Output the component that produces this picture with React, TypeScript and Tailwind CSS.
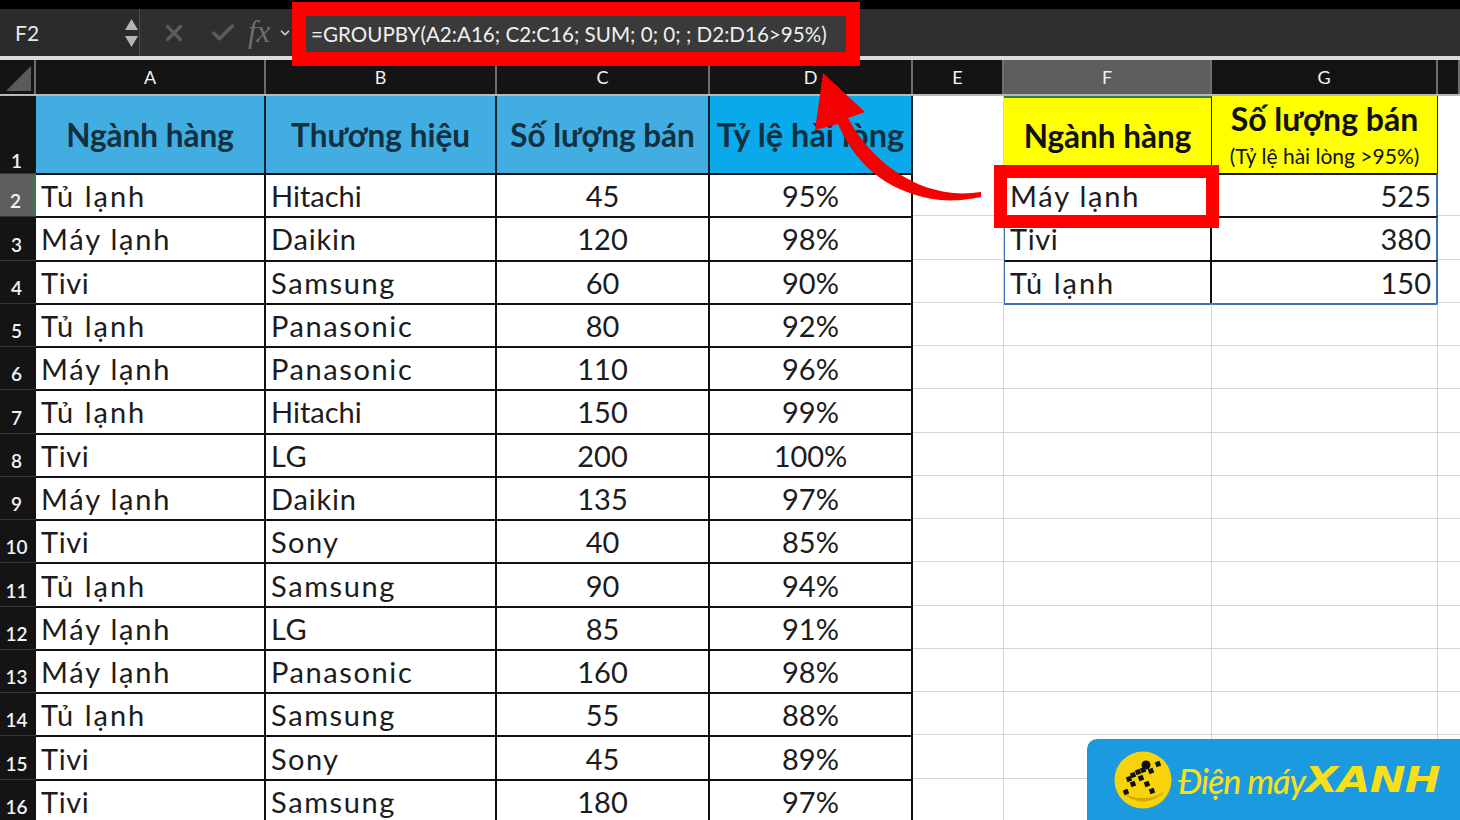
import React from 'react'
import { X, Check, ChevronDown } from 'lucide-react'

const rows = [
  ["Tủ lạnh", "Hitachi", "45", "95%"],
  ["Máy lạnh", "Daikin", "120", "98%"],
  ["Tivi", "Samsung", "60", "90%"],
  ["Tủ lạnh", "Panasonic", "80", "92%"],
  ["Máy lạnh", "Panasonic", "110", "96%"],
  ["Tủ lạnh", "Hitachi", "150", "99%"],
  ["Tivi", "LG", "200", "100%"],
  ["Máy lạnh", "Daikin", "135", "97%"],
  ["Tivi", "Sony", "40", "85%"],
  ["Tủ lạnh", "Samsung", "90", "94%"],
  ["Máy lạnh", "LG", "85", "91%"],
  ["Máy lạnh", "Panasonic", "160", "98%"],
  ["Tủ lạnh", "Samsung", "55", "88%"],
  ["Tivi", "Sony", "45", "89%"],
  ["Tivi", "Samsung", "180", "97%"],
]

const result: Record<number, [string, string]> = {
  0: ["Máy lạnh", "525"],
  1: ["Tivi", "380"],
  2: ["Tủ lạnh", "150"],
}

// Lato runs narrower than the sheet's font on some words, so spacing differs per word
const track: Record<string, string> = {
  "Tủ lạnh": "tracking-[2px]",
  "Máy lạnh": "tracking-[1.8px]",
  "Tivi": "tracking-[0.6px]",
  "Hitachi": "tracking-[0px]",
  "Daikin": "tracking-[0.8px]",
  "Samsung": "tracking-[1.6px]",
  "Panasonic": "tracking-[1.6px]",
  "LG": "tracking-[0.5px]",
  "Sony": "tracking-[1.4px]",
}

const cols = "grid grid-cols-[36px_230px_231px_213px_203px_91px_208px_226px_22px]"

const runnerDots = [
  [44, 13], [37, 20], [29, 19], [24, 21], [19, 24], [15, 28],
  [27, 27], [19, 33], [12, 41], [33, 33], [38, 40],
]

function ColHead({ label, active }: { label: string; active?: boolean }) {
  return (
    <div className={"flex items-center justify-center border-r-2 border-[#6e6e6e] pt-[1px] text-[18px] text-[#f2f2f2] " + (active ? "bg-[#5e5e5e]" : "bg-[#141414]")}>
      {label}
    </div>
  )
}

function Head({ label, bg, size }: { label: string; bg: string; size: string }) {
  return (
    <div className={"flex items-center justify-center border-r-2 border-[#10202a] pt-[2px] font-bold text-[#12303f] " + size + " " + bg}>
      {label}
    </div>
  )
}

function Runner() {
  return (
    <svg viewBox="0 0 58 58" className="h-[58px] w-[58px] shrink-0">
      <circle cx="29" cy="29" r="28.5" fill="#f7d40a" />
      <path d="M7 40 A 28 28 0 0 0 51 40 A 30 22 0 0 1 7 40 Z" fill="#d9a900" />
      <circle cx="32" cy="14" r="4.5" fill="#111" />
      {runnerDots.map(([x, y]) => (
        <rect key={x + "-" + y} x={x - 2.5} y={y - 2.5} width="5" height="5" fill="#111" transform={`rotate(-20 ${x} ${y})`} />
      ))}
    </svg>
  )
}

export default function App() {
  return (
    <div className="relative h-[820px] w-[1460px] overflow-hidden bg-white font-['Lato','Noto_Sans',sans-serif] text-[#1c1c1c]">
      {/* top strip */}
      <div className="h-[9px] bg-black" />

      {/* formula bar */}
      <div className="flex h-[47px] items-center bg-[#2f2f2f] text-[#e8e8e8]">
        <div className="flex h-full w-[140px] items-center justify-between border-r border-[#4a4a4a] bg-[#2b2b2b] pl-[15px] pr-[1px]">
          <span className="text-[21px]">F2</span>
          <div className="flex flex-col gap-[6px]">
            <svg viewBox="0 0 12 10" className="h-[11px] w-[13px]"><path d="M6 0 12 10H0Z" fill="#b5b5b5" /></svg>
            <svg viewBox="0 0 12 10" className="h-[11px] w-[13px]"><path d="M0 0H12L6 10Z" fill="#b5b5b5" /></svg>
          </div>
        </div>
        <X className="ml-[21px] h-[26px] w-[26px] text-[#5c5c5c]" strokeWidth={3} />
        <Check className="ml-[22px] h-[28px] w-[28px] text-[#5c5c5c]" strokeWidth={3} />
        <span className="ml-[11px] font-['Liberation_Serif',serif] text-[31px] italic text-[#6e6e6e]">fx</span>
        <ChevronDown className="ml-[8px] h-[14px] w-[14px] text-[#cfcfcf]" strokeWidth={3} />
      </div>
      <div className="h-[4px] bg-[#dcdcdc]" />

      {/* column letters */}
      <div className={cols + " h-[36px] border-b-2 border-[#b8b8b8]"}>
        <div className="relative border-r-2 border-[#6e6e6e] bg-[#141414]">
          <svg viewBox="0 0 26 26" className="absolute bottom-[3px] right-[3px] h-[25px] w-[25px]"><path d="M26 0V26H0Z" fill="#5a5a5a" /></svg>
        </div>
        <ColHead label="A" />
        <ColHead label="B" />
        <ColHead label="C" />
        <ColHead label="D" />
        <ColHead label="E" />
        <ColHead label="F" active />
        <ColHead label="G" />
        <ColHead label="" />
      </div>

      {/* header row */}
      <div className={cols + " h-[77px]"}>
        <div className="flex items-end justify-center bg-[#141414] pb-[3px] pr-[3px] text-[19px] font-semibold leading-none text-[#f2f2f2]">1</div>
        <Head label="Ngành hàng" bg="bg-[#41ade0]" size="text-[31.5px]" />
        <Head label="Thương hiệu" bg="bg-[#41ade0]" size="text-[31.5px]" />
        <Head label="Số lượng bán" bg="bg-[#41ade0]" size="text-[31.5px]" />
        <Head label="Tỷ lệ hài lòng" bg="bg-[#0aa9ea]" size="text-[32.5px]" />
        <div className="border-r border-[#d6d6d6]" />
        <div className="flex items-center justify-center border-t-2 border-t-[#2f7d4f] border-r border-[#222] bg-[#ffff00] pt-[2px] text-[31.5px] font-bold text-[#111]">Ngành hàng</div>
        <div className="flex flex-col items-center justify-center border-r border-[#222] bg-[#ffff00] leading-none text-[#111]">
          <span className="text-[32px] font-bold">Số lượng bán</span>
          <span className="mt-[10px] text-[21px]">(Tỷ lệ hài lòng &gt;95%)</span>
        </div>
        <div />
      </div>

      {/* data rows */}
      {rows.map((row, i) => {
        const res = result[i]
        return (
          <div key={i} className={cols + " h-[43.27px] text-[29px] leading-none"}>
            <div className={"flex items-end justify-center border-t border-[#333] pb-[6px] pr-[3px] text-[19px] font-semibold text-[#f2f2f2] " + (i === 0 ? "border-r-2 border-r-[#2f7d4f] bg-[#5e5e5e]" : "bg-[#141414]")}>
              {i + 2}
            </div>
            <div className={"flex items-center truncate border-t-2 border-r-2 border-[#111] pl-[5px] " + track[row[0]]}>{row[0]}</div>
            <div className={"flex items-center truncate border-t-2 border-r-2 border-[#111] pl-[5px] " + track[row[1]]}>{row[1]}</div>
            <div className="flex items-center justify-center border-t-2 border-r-2 border-[#111]">{row[2]}</div>
            <div className="flex items-center justify-center border-t-2 border-r-2 border-[#111]">{row[3]}</div>
            <div className="border-b border-r border-[#d6d6d6]" />
            {res ? (
              <>
                <div className={"flex items-center border-t-2 border-r-2 border-l border-[#111] border-l-[#3f6fb5] pl-[5px] " + track[res[0]]}>{res[0]}</div>
                <div className="flex items-center justify-end border-t-2 border-r-2 border-[#111] border-r-[#3f6fb5] pr-[5px]">{res[1]}</div>
              </>
            ) : (
              <>
                <div className={"border-b border-r border-[#d6d6d6] " + (i === 3 ? "border-t-2 border-t-[#3f6fb5]" : "")} />
                <div className={"border-b border-r border-[#d6d6d6] " + (i === 3 ? "border-t-2 border-t-[#3f6fb5]" : "")} />
              </>
            )}
            <div className="border-b border-[#d6d6d6]" />
          </div>
        )
      })}

      {/* formula callout */}
      <div className="absolute left-[292px] top-[2px] flex h-[64px] w-[568px] items-center whitespace-nowrap border-[14px] border-[#ff0000] bg-[#3a3a3a] pl-[5px] text-[20.6px] text-[#f0f0f0]">
        =GROUPBY(A2:A16; C2:C16; SUM; 0; 0; ; D2:D16&gt;95%)
      </div>

      {/* result cell callout */}
      <div className="absolute left-[994px] top-[165px] h-[63px] w-[225px] border-[13px] border-[#ff0000]" />

      {/* arrow */}
      <svg viewBox="0 0 1460 820" className="pointer-events-none absolute left-0 top-0 h-[820px] w-[1460px]">
        <path d="M823 73 L865 112 L848 118 C868 155 905 188 953 193 C965 194 972 193 981 192 L981 197 C965 200 955 201 940 200 C893 194 858 170 838 124 L815 130 Z" fill="#f50000" />
      </svg>

      {/* logo */}
      <div className="absolute left-[1087px] top-[739px] flex h-[81px] w-[373px] items-center rounded-tl-[10px] bg-[#1b9ae0] pl-[27px]">
        <Runner />
        <span className="ml-[6px] whitespace-nowrap pt-[2px] text-[34px] font-medium italic tracking-[-1px] text-[#f7e017]">Điện máy</span>
        <span className="origin-left scale-x-[1.22] whitespace-nowrap pt-[2px] font-['DejaVu_Sans',sans-serif] text-[35px] font-bold italic tracking-[-0.5px] text-[#f7e017]">XANH</span>
      </div>
    </div>
  )
}
